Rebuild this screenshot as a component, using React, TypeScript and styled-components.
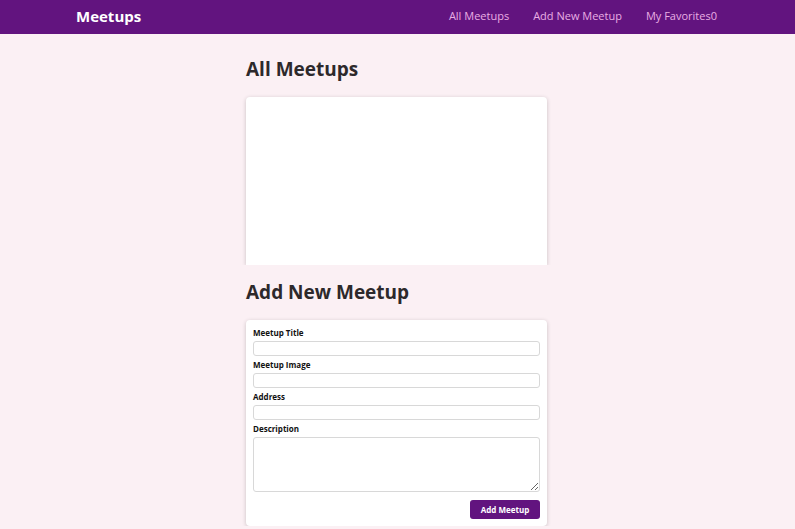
import React from "react";
import styled, { createGlobalStyle } from "styled-components";

const Global = createGlobalStyle`
  * { box-sizing: border-box; }
  body {
    margin: 0;
    background: #fbf0f4;
    font-family: "Open Sans", "Noto Sans", sans-serif;
  }
`;

const Header = styled.header`
  height: 34px;
  background: #62147f;
  display: flex;
  align-items: center;
  justify-content: space-between;
  padding: 0 78px 3px 76px;
`;

const Logo = styled.div`
  color: #ffffff;
  font-weight: 700;
  font-size: 15px;
`;

const Nav = styled.nav`
  display: flex;
  gap: 24px;
`;

const NavLink = styled.a`
  color: #e9aee3;
  font-size: 11px;
  text-decoration: none;
`;

const Main = styled.main`
  width: 303px;
  margin: 0 auto;
  padding: 22px 2px 0 0;
`;

const Title = styled.h1<{ $gap: number }>`
  margin: 0 0 ${(p) => p.$gap}px;
  font-size: 19px;
  line-height: 27px;
  font-weight: 700;
  color: #2d292b;
`;

const Card = styled.div<{ $clip?: boolean }>`
  background: #ffffff;
  border-radius: 4px;
  box-shadow: 0 1px 4px rgba(0, 0, 0, 0.2);
  ${(p) => (p.$clip ? "clip-path: inset(-10px -10px 0 -10px);" : "")}
`;

const EmptyCard = styled(Card)`
  height: 168px;
  margin-bottom: 14px;
  border-bottom-left-radius: 0;
  border-bottom-right-radius: 0;
`;

const Form = styled.form`
  padding: 7px;
`;

const Control = styled.div`
  margin-bottom: 3px;
`;

const Label = styled.label`
  display: block;
  font-size: 8px;
  line-height: 11px;
  font-weight: 700;
  color: #111;
  margin-bottom: 3px;
`;

const Input = styled.input`
  display: block;
  width: 100%;
  height: 15px;
  border: 1px solid #d8d8d8;
  border-radius: 3px;
  font: inherit;
  font-size: 8px;
  padding: 2px;
  background: #fff;
`;

const TextArea = styled.textarea`
  display: block;
  width: 100%;
  height: 55px;
  border: 1px solid #d8d8d8;
  border-radius: 3px;
  font: inherit;
  font-size: 8px;
  padding: 2px;
  background: #fff;
`;

const Actions = styled.div`
  margin-top: 8px;
  display: flex;
  justify-content: flex-end;
`;

const Button = styled.button`
  width: 70px;
  height: 19px;
  border: none;
  border-radius: 3px;
  background: #62147f;
  color: #fff;
  font-family: inherit;
  font-size: 8px;
  font-weight: 700;
  cursor: pointer;
  padding: 0;
`;

export default function App() {
  return (
    <>
      <Global />
      <Header>
        <Logo>Meetups</Logo>
        <Nav>
          <NavLink href="#">All Meetups</NavLink>
          <NavLink href="#">Add New Meetup</NavLink>
          <NavLink href="#">My Favorites0</NavLink>
        </Nav>
      </Header>
      <Main>
        <Title $gap={14}>All Meetups</Title>
        <EmptyCard $clip />
        <Title $gap={14}>Add New Meetup</Title>
        <Card>
          <Form onSubmit={(e) => e.preventDefault()}>
            <Control>
              <Label htmlFor="title">Meetup Title</Label>
              <Input id="title" type="text" />
            </Control>
            <Control>
              <Label htmlFor="image">Meetup Image</Label>
              <Input id="image" type="url" />
            </Control>
            <Control>
              <Label htmlFor="address">Address</Label>
              <Input id="address" type="text" />
            </Control>
            <Control>
              <Label htmlFor="description">Description</Label>
              <TextArea id="description" />
            </Control>
            <Actions>
              <Button type="submit">Add Meetup</Button>
            </Actions>
          </Form>
        </Card>
      </Main>
    </>
  );
}
